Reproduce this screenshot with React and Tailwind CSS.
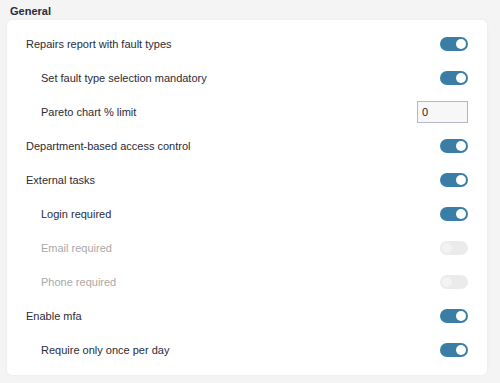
import React, { useState } from "react";

const settings = [
  { key: "repairs", label: "Repairs report with fault types", level: 0, type: "toggle", on: true },
  { key: "mandatory", label: "Set fault type selection mandatory", level: 1, type: "toggle", on: true },
  { key: "pareto", label: "Pareto chart % limit", level: 1, type: "input", value: "0" },
  { key: "dept", label: "Department-based access control", level: 0, type: "toggle", on: true },
  { key: "external", label: "External tasks", level: 0, type: "toggle", on: true },
  { key: "login", label: "Login required", level: 1, type: "toggle", on: true },
  { key: "email", label: "Email required", level: 1, type: "toggle", on: false, disabled: true },
  { key: "phone", label: "Phone required", level: 1, type: "toggle", on: false, disabled: true },
  { key: "mfa", label: "Enable mfa", level: 0, type: "toggle", on: true },
  { key: "once", label: "Require only once per day", level: 1, type: "toggle", on: true },
];

const Toggle = ({ on, disabled, onChange }) => (
  <button
    type="button"
    disabled={disabled}
    onClick={onChange}
    className={`relative h-[14px] w-[28px] rounded-full ${
      disabled ? "bg-[#ebebeb]" : on ? "bg-[#3a7ea8]" : "bg-[#c4c4c4]"
    }`}
  >
    <span
      className={`absolute top-[2px] h-[10px] w-[10px] rounded-full ${
        disabled ? "left-[2px] bg-[#f3f3f3]" : on ? "left-[16px] bg-white" : "left-[2px] bg-white"
      }`}
    />
  </button>
);

const App = () => {
  const [values, setValues] = useState(
    Object.fromEntries(settings.map((s) => [s.key, s.type === "input" ? s.value : s.on]))
  );

  return (
    <div className="min-h-screen bg-[#f4f4f4] font-['Liberation_Sans',Arial,sans-serif] pt-[4px] pl-[7px] pr-[13px]">
      <div className="pl-[3px] text-[11px] font-bold text-[#2b2b3a] leading-[14px] mb-[2px]">General</div>
      <div className="bg-white rounded-[5px] shadow-[0_0_3px_rgba(0,0,0,0.06)] pt-[7px] pb-[8px] pl-[19px] pr-[19px]">
        {settings.map((s) => (
          <div key={s.key} className="flex h-[34px] items-center justify-between">
            <span
              className={`text-[11px] ${s.level === 1 ? "pl-[15px]" : ""} ${
                s.disabled ? "text-[#a8a8a8]" : "text-[#2b2b36]"
              }`}
            >
              {s.label}
            </span>
            {s.type === "input" ? (
              <input
                value={values[s.key]}
                onChange={(e) => setValues({ ...values, [s.key]: e.target.value })}
                className="h-[22px] w-[51px] border border-[#b6b6c8] bg-[#f7f7f7] px-[4px] text-[11px] text-[#222] outline-none"
              />
            ) : (
              <Toggle
                on={values[s.key]}
                disabled={s.disabled}
                onChange={() => setValues({ ...values, [s.key]: !values[s.key] })}
              />
            )}
          </div>
        ))}
      </div>
    </div>
  );
};

export default App;
